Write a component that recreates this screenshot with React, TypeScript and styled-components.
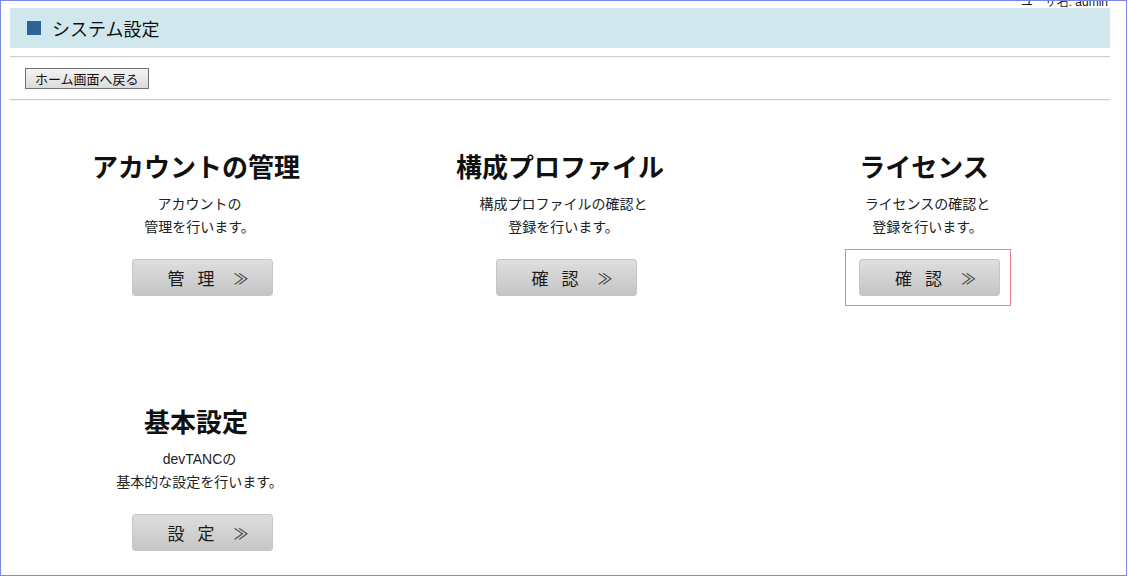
import React from "react";
import styled, { createGlobalStyle } from "styled-components";

const GlobalStyle = createGlobalStyle`
  html, body {
    margin: 0;
    padding: 0;
    background: #ffffff;
  }
  body {
    font-family: "Liberation Sans", "Noto Sans CJK JP", sans-serif;
    color: #111111;
  }
`;

const Frame = styled.div`
  position: relative;
  box-sizing: border-box;
  width: 1127px;
  height: 576px;
  border: 1px solid #7c88e8;
  padding: 7px 0 0 9px;
  overflow: hidden;
`;

const UserName = styled.div`
  position: absolute;
  top: -9px;
  right: 18px;
  font-size: 12px;
  color: #222;
  font-family: "Liberation Sans", "Noto Sans CJK JP", sans-serif;
`;

const Page = styled.div`
  width: 1100px;
`;

const TitleBar = styled.div`
  display: flex;
  align-items: center;
  gap: 11px;
  height: 40px;
  padding-left: 17px;
  background: #d0e8ed;
`;

const Square = styled.span`
  width: 14px;
  height: 14px;
  background: #2c6496;
`;

const PageTitle = styled.h1`
  margin: 0;
  font-size: 18px;
  font-weight: normal;
  color: #111;
  font-family: "Noto Sans CJK JP", sans-serif;
`;

const Spacer = styled.div`
  height: 8px;
`;

const Rule = styled.hr`
  margin: 0;
  border: 0;
  border-top: 1px solid #cfcfcf;
  border-bottom: 1px solid #f2f2f2;
`;

const ToolRow = styled.div`
  padding: 10px 0 10px 15px;
`;

const BackButton = styled.button`
  display: block;
  height: 21px;
  padding: 0 9px;
  font-family: "Noto Sans CJK JP", sans-serif;
  font-size: 13px;
  line-height: 17px;
  color: #111;
  background: linear-gradient(#f4f4f4, #dcdcdc);
  border: 1px solid #707070;
  border-radius: 0;
`;

const Grid = styled.div`
  display: grid;
  grid-template-columns: repeat(3, 364px);
  row-gap: 107px;
  padding: 47px 0 0 10px;
`;

const Card = styled.div`
  display: flex;
  flex-direction: column;
  align-items: center;
`;

const CardTitle = styled.h2`
  margin: 0;
  padding-right: 12px;
  font-size: 26px;
  line-height: 36px;
  font-weight: bold;
  color: #111;
  font-family: "Noto Sans CJK JP", sans-serif;
`;

const CardText = styled.p`
  margin: 9px 0 0;
  padding-right: 5px;
  font-size: 14px;
  line-height: 23px;
  text-align: center;
  color: #222;
  font-family: "Liberation Sans", "Noto Sans CJK JP", sans-serif;
`;

const Focus = styled.div<{ $active?: boolean }>`
  margin: ${(p) => (p.$active ? "10px 4px -10px 0" : "20px 0 0")};
  padding: ${(p) => (p.$active ? "9px 10px 9px 13px" : "0")};
  border: ${(p) => (p.$active ? "1px solid #f08088" : "none")};
`;

const ActionButton = styled.button`
  display: flex;
  align-items: center;
  justify-content: center;
  gap: 13px;
  width: 141px;
  height: 37px;
  padding: 0 0 0 12px;
  font-family: "Noto Sans CJK JP", sans-serif;
  font-size: 17px;
  color: #1a1a1a;
  background: linear-gradient(#dedede, #c5c5c5);
  border: 1px solid #c6c6c6;
  border-radius: 3px;
`;

const Arrow = styled.span`
  margin-left: 6px;
  font-size: 15px;
  color: #333;
`;

type Item = {
  title: string;
  lines: string[];
  action: string[];
  active?: boolean;
};

const items: Item[] = [
  { title: "アカウントの管理", lines: ["アカウントの", "管理を行います。"], action: ["管", "理"] },
  { title: "構成プロファイル", lines: ["構成プロファイルの確認と", "登録を行います。"], action: ["確", "認"] },
  { title: "ライセンス", lines: ["ライセンスの確認と", "登録を行います。"], action: ["確", "認"], active: true },
  { title: "基本設定", lines: ["devTANCの", "基本的な設定を行います。"], action: ["設", "定"] },
];

export default function App() {
  return (
    <>
      <GlobalStyle />
      <Frame>
        <UserName>ユーザ名: admin</UserName>
        <Page>
          <TitleBar>
            <Square />
            <PageTitle>システム設定</PageTitle>
          </TitleBar>
          <Spacer />
          <Rule />
          <ToolRow>
            <BackButton>ホーム画面へ戻る</BackButton>
          </ToolRow>
          <Rule />
          <Grid>
            {items.map((it) => (
              <Card key={it.title}>
                <CardTitle>{it.title}</CardTitle>
                <CardText>
                  {it.lines[0]}
                  <br />
                  {it.lines[1]}
                </CardText>
                <Focus $active={it.active}>
                  <ActionButton>
                    <span>{it.action[0]}</span>
                    <span>{it.action[1]}</span>
                    <Arrow>≫</Arrow>
                  </ActionButton>
                </Focus>
              </Card>
            ))}
          </Grid>
        </Page>
      </Frame>
    </>
  );
}
